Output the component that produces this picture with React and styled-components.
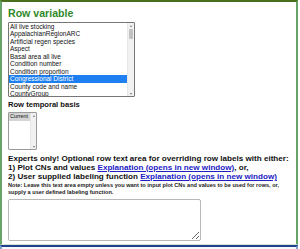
import React from "react";
import styled, { createGlobalStyle } from "styled-components";

const Global = createGlobalStyle`
  html, body { margin: 0; padding: 0; background: #fff; }
  body { font-family: "Liberation Sans", Arial, sans-serif; color: #111; }
`;

const Page = styled.div`
  width: 300px;
  height: 249px;
  overflow: hidden;
  display: flex;
  flex-direction: column;
`;

const Panel = styled.section`
  width: 298px;
  box-sizing: border-box;
  border-top: 2px solid #4b6f1c;
  border-left: 2px solid #67a467;
  border-right: 2px solid #67a467;
  border-bottom: 1px solid #d8e4d8;
  padding: 5px 6px 0 6px;
  height: 246px;
  display: flex;
  flex-direction: column;
  align-items: flex-start;
`;

const NextPanel = styled.div`
  width: 298px;
  box-sizing: border-box;
  border-top: 2px solid #203f8c;
  border-left: 2px solid #7f9fd0;
  border-right: 2px solid #7f9fd0;
  height: 4px;
  background: #f4f7fc;
`;

const Heading = styled.h2`
  margin: 0;
  font-size: 10.6px;
  line-height: 13px;
  font-weight: bold;
  color: #2f8a2a;
`;

const ListBox = styled.div`
  margin-top: 2px;
  position: relative;
  width: 127px;
  height: 75px;
  box-sizing: border-box;
  border: 1px solid #767676;
  border-radius: 1px;
  overflow: hidden;
  background: #fff;
  padding-right: ${(p) => p.$sb}px;
`;

const Item = styled.div`
  font-size: ${(p) => p.$fs}px;
  line-height: ${(p) => p.$lh}px;
  height: ${(p) => p.$lh}px;
  white-space: nowrap;
  padding-left: 1px;
  color: ${(p) => (p.$sel === "focus" ? "#fff" : "#111")};
  background: ${(p) =>
    p.$sel === "focus" ? "#1e7ff0" : p.$sel === "blur" ? "#d4d4d4" : "transparent"};
`;

const Scroll = styled.div`
  position: absolute;
  top: 0;
  right: 0;
  bottom: 0;
  width: ${(p) => p.$w}px;
  background: #f1f1f1;
  border-left: 1px solid #e6e6e6;
`;

const Arrow = styled.div`
  position: absolute;
  left: 0;
  right: 0;
  height: 5px;
  ${(p) => (p.$down ? "bottom: 0;" : "top: 0;")}
  display: flex;
  align-items: center;
  justify-content: center;
  &::after {
    content: "";
    border-left: 1.5px solid transparent;
    border-right: 1.5px solid transparent;
    ${(p) =>
      p.$down ? "border-top: 2px solid #7a7a7a;" : "border-bottom: 2px solid #7a7a7a;"}
  }
`;

const Thumb = styled.div`
  position: absolute;
  left: 1px;
  right: 1px;
  top: 6px;
  height: 10px;
  background: #c2c2c2;
  border-radius: 1px;
`;

const SubHeading = styled.h4`
  margin: 3px 0 0 0;
  font-size: 7.6px;
  line-height: 10px;
  font-weight: bold;
`;

const SmallBox = styled(ListBox)`
  margin-top: 2px;
  width: 29px;
  height: 38px;
  border-color: #9a9a9a;
`;

const Expert = styled.div`
  margin-top: 4px;
  font-size: 8.1px;
  line-height: 9px;
  font-weight: bold;
`;

const Link = styled.a`
  color: #2121c4;
  text-decoration: underline;
`;

const Note = styled.div`
  font-size: 5.6px;
  line-height: 7.6px;
  font-weight: bold;
  color: #222;
  margin-top: 0.5px;
`;

const TextArea = styled.textarea`
  margin-top: 2px;
  width: 193px;
  height: 42px;
  box-sizing: border-box;
  border: 1px solid #b8b8b8;
  border-radius: 2px;
  resize: both;
  font-family: "Liberation Mono", monospace;
  font-size: 7px;
  display: block;
`;

const options = [
  "All live stocking",
  "AppalachianRegionARC",
  "Artificial regen species",
  "Aspect",
  "Basal area all live",
  "Condition number",
  "Condition proportion",
  "Congressional District",
  "County code and name",
  "CountyGroup",
];

function ScrollBar({ w }) {
  return (
    <Scroll $w={w}>
      <Arrow />
      <Thumb />
      <Arrow $down />
    </Scroll>
  );
}

export default function App() {
  return (
    <Page>
      <Global />
      <Panel>
        <Heading>Row variable</Heading>
        <ListBox $sb={6}>
          {options.map((o, i) => (
            <Item key={o} $fs={6.5} $lh={7.45} $sel={i === 7 ? "focus" : undefined}>
              {o}
            </Item>
          ))}
          <ScrollBar w={6} />
        </ListBox>
        <SubHeading>Row temporal basis</SubHeading>
        <SmallBox $sb={5}>
          <Item $fs={5.4} $lh={7.5} $sel="blur">
            Current
          </Item>
          <Scroll $w={5}>
            <Arrow />
            <Arrow $down />
          </Scroll>
        </SmallBox>
        <Expert>
          Experts only! Optional row text area for overriding row labels with either:
          <br />
          1) Plot CNs and values <Link href="#">Explanation (opens in new window)</Link>, or,
          <br />
          2) User supplied labeling function{" "}
          <Link href="#">Explanation (opens in new window)</Link>
        </Expert>
        <Note>
          Note: Leave this text area empty unless you want to input plot CNs and values to be
          used for rows, or, supply a user defined labeling function.
        </Note>
        <TextArea />
      </Panel>
      <NextPanel />
    </Page>
  );
}
